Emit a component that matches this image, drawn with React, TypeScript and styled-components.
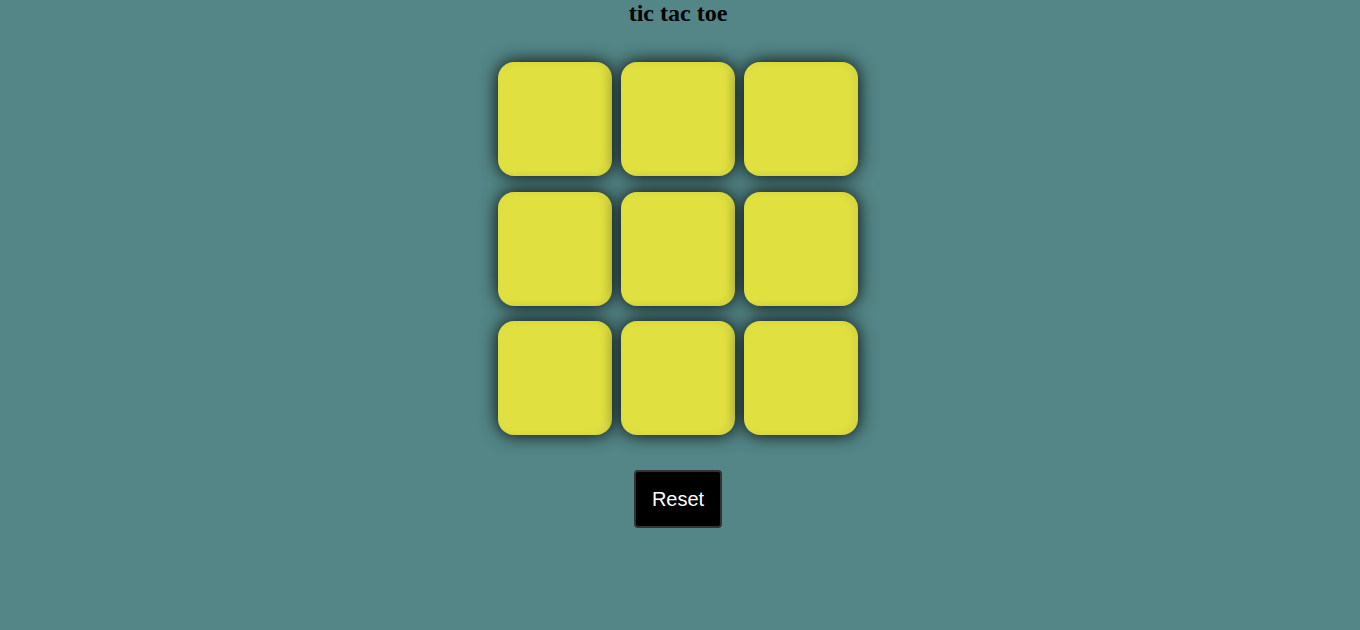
import React from "react";
import styled, { createGlobalStyle } from "styled-components";

const Global = createGlobalStyle`
  html, body { margin: 0; padding: 0; }
  body { background: #548687; font-family: "Liberation Serif", serif; }
`;

const Page = styled.main`
  display: flex;
  flex-direction: column;
  align-items: center;
  padding-right: 4px;
`;

const Title = styled.h1`
  margin: 0;
  font-family: "Liberation Serif", serif;
  font-size: 24px;
  line-height: 27px;
  font-weight: bold;
  color: #000;
`;

const Board = styled.div`
  margin-top: 35px;
  display: grid;
  grid-template-columns: repeat(3, 114px);
  grid-auto-rows: 114px;
  column-gap: 9px;
  row-gap: 15.5px;
`;

const Cell = styled.button`
  border: none;
  border-radius: 16px;
  background: #e0e041;
  box-shadow: 0 0 18px rgba(0, 0, 0, 0.95), inset -4px 0 8px rgba(0, 0, 0, 0.06);
  cursor: pointer;
  padding: 0;
`;

const Reset = styled.button`
  margin-top: 35px;
  width: 88px;
  height: 58px;
  background: #000;
  color: #fff;
  border: 2px solid #333;
  border-radius: 4px;
  font-family: "Liberation Sans", Arial, sans-serif;
  font-size: 20px;
  cursor: pointer;
`;

export default function App() {
  return (
    <Page>
      <Global />
      <Title>tic tac toe</Title>
      <Board>
        {Array.from({ length: 9 }).map((_, i) => (
          <Cell key={i} />
        ))}
      </Board>
      <Reset>Reset</Reset>
    </Page>
  );
}
